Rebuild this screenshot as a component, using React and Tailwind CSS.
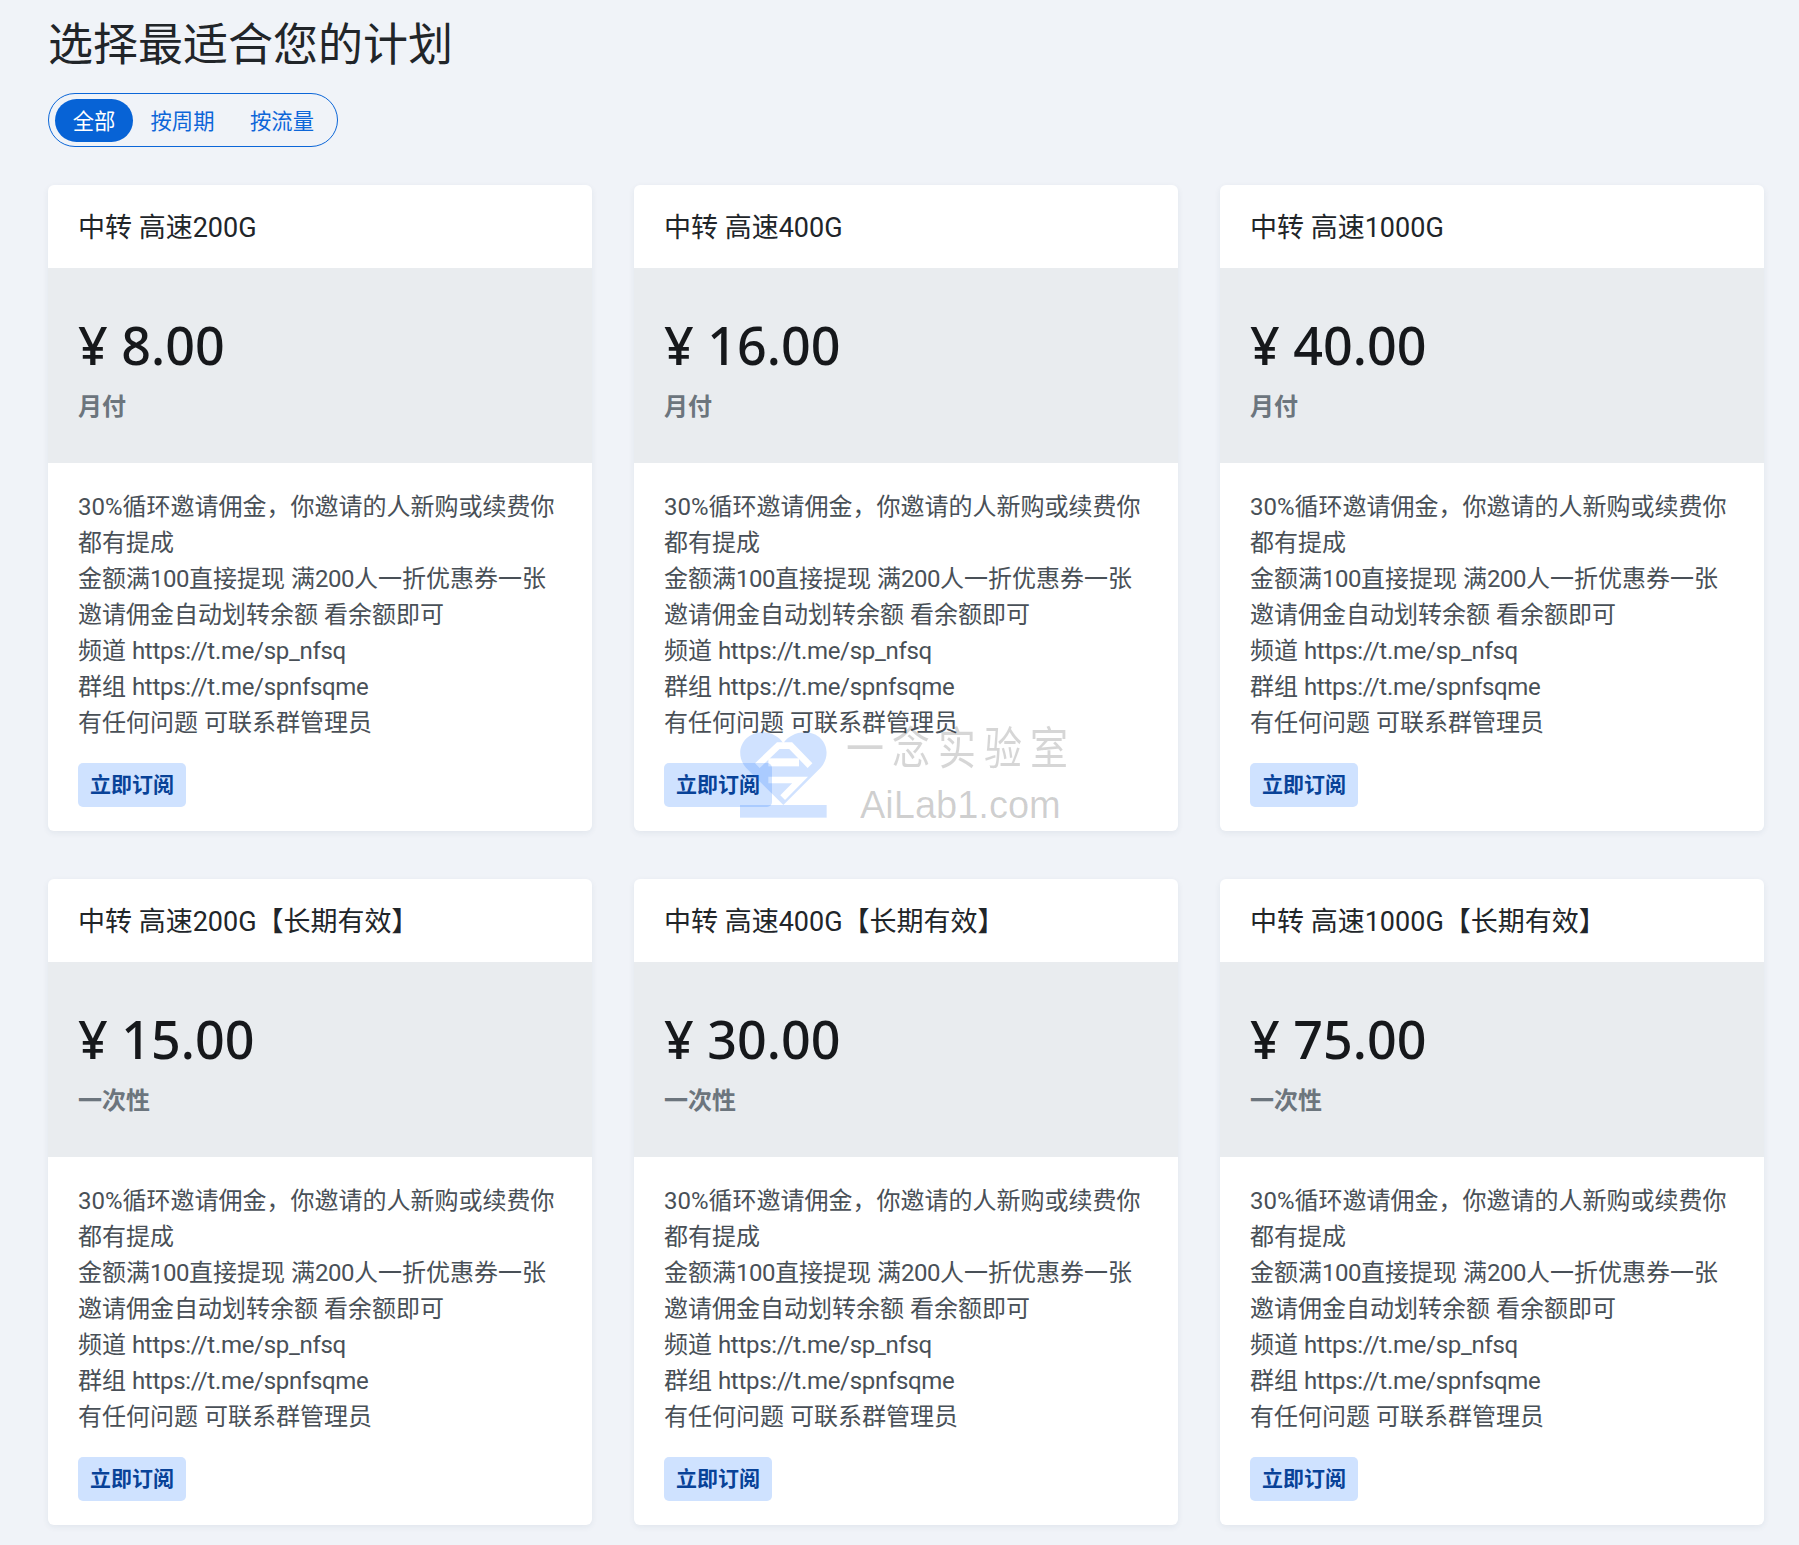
const plans = [
  { id: 1, name: '中转 高速200G', price: '8.00', period: '月付' },
  { id: 2, name: '中转 高速400G', price: '16.00', period: '月付' },
  { id: 3, name: '中转 高速1000G', price: '40.00', period: '月付' },
  { id: 4, name: '中转 高速200G【长期有效】', price: '15.00', period: '一次性' },
  { id: 5, name: '中转 高速400G【长期有效】', price: '30.00', period: '一次性' },
  { id: 6, name: '中转 高速1000G【长期有效】', price: '75.00', period: '一次性' },
]

const lines = [
  '30%循环邀请佣金，你邀请的人新购或续费你都有提成',
  '金额满100直接提现 满200人一折优惠券一张',
  '邀请佣金自动划转余额 看余额即可',
  '频道 https://t.me/sp_nfsq',
  '群组 https://t.me/spnfsqme',
  '有任何问题 可联系群管理员',
]

// latin runs sit a little tighter than Roboto's default
function Line({ text }) {
  return (
    <div>
      {text.split(/(100|200|https\S+)/).map((part, i) => {
        if (i % 2 === 0) return part
        return (
          <span key={i} className={part.startsWith('http') ? 'tracking-[-0.3px]' : 'tracking-[-0.5px]'}>
            {part}
          </span>
        )
      })}
    </div>
  )
}

function Watermark() {
  return (
    <div className="pointer-events-none absolute left-[730px] top-[715px] h-[115px] w-[360px]">
      <svg className="absolute left-0 top-[10px]" width="110" height="100" viewBox="0 0 330 300">
        <mask id="wm">
          <rect width="330" height="300" fill="black" />
          <path d="M160 240L48 128C10 85 38 22 98 22C125 22 148 36 160 55C172 36 197 22 224 22C284 22 310 85 272 128Z" fill="white" />
          <rect x="30" y="240" width="260" height="38" fill="white" />
          <path d="M82 122L145 62H182L240 122" fill="none" stroke="black" strokeWidth="20" />
          <rect x="115" y="100" width="92" height="24" fill="black" />
          <path d="M115 165H210L158 218" fill="none" stroke="black" strokeWidth="20" />
        </mask>
        <rect width="330" height="300" fill="#2178ff" fillOpacity="0.21" mask="url(#wm)" />
      </svg>
      <div className="absolute left-[116px] top-[9px] origin-center scale-y-[1.2] whitespace-nowrap text-[38px] leading-[50px] tracking-[8px] text-[rgba(0,0,0,0.16)]">
        一念实验室
      </div>
      <div className="absolute left-[130px] top-[68px] whitespace-nowrap font-['Liberation_Sans',sans-serif] text-[38px] leading-[44px] text-[rgba(0,0,0,0.19)]">
        AiLab1.com
      </div>
    </div>
  )
}

function PlanCard({ plan }) {
  return (
    <div className="overflow-hidden rounded-[6px] bg-white shadow-[0_2px_6px_rgba(30,50,90,0.07)]">
      <div className="h-[83px] px-[30px] pt-[25px] text-[27px] leading-[36px] text-[#212529]">{plan.name}</div>

      {/* price block */}
      <div className="h-[195px] bg-[#e9ecef] px-[30px] pt-[46px]">
        <div className="font-['Noto_Sans','Noto_Sans_CJK_SC',sans-serif] text-[52px] font-medium leading-[62px] text-[#16181b]">
          ¥ {plan.price}
        </div>
        <div className="mt-[13px] text-[24px] font-bold leading-[36px] text-[#6c757d]">{plan.period}</div>
      </div>

      <div className="px-[30px] pb-[24px] pt-[26px]">
        <div className="text-[24px] leading-[36px] text-[#495057]">
          {lines.map((line) => (
            <Line key={line} text={line} />
          ))}
        </div>
        <button className="mt-[22px] block h-[44px] w-[108px] rounded-[5px] bg-[#cfe2ff] pt-[1px] text-[21px] font-bold text-[#084298]">
          立即订阅
        </button>
      </div>
    </div>
  )
}

export default function App() {
  return (
    <div className="relative min-h-[1545px] bg-[#f0f3f8] pb-[20px] pl-[48px] pr-[35px] pt-[19px] font-['Roboto','Noto_Sans_CJK_SC',sans-serif]">
      <h2 className="text-[45px] font-normal leading-[54px] text-[#212529]">选择最适合您的计划</h2>

      {/* filter tabs */}
      <div className="mt-[20px] flex h-[54px] w-[290px] items-center rounded-full border border-[#0b66d8] p-[6px]">
        <button className="h-[43px] w-[78px] shrink-0 rounded-full bg-[#0763d6] pt-[3px] text-[21.3px] text-white">全部</button>
        <button className="h-[43px] w-[99px] shrink-0 rounded-full pt-[3px] text-[21.3px] text-[#0d66d8]">按周期</button>
        <button className="h-[43px] w-[100px] shrink-0 rounded-full pt-[3px] text-[21.3px] text-[#0d66d8]">按流量</button>
      </div>

      <div className="mt-[38px] grid grid-cols-3 gap-x-[42px] gap-y-[48px]">
        {plans.map((plan) => (
          <PlanCard key={plan.id} plan={plan} />
        ))}
      </div>

      <Watermark />
    </div>
  )
}
